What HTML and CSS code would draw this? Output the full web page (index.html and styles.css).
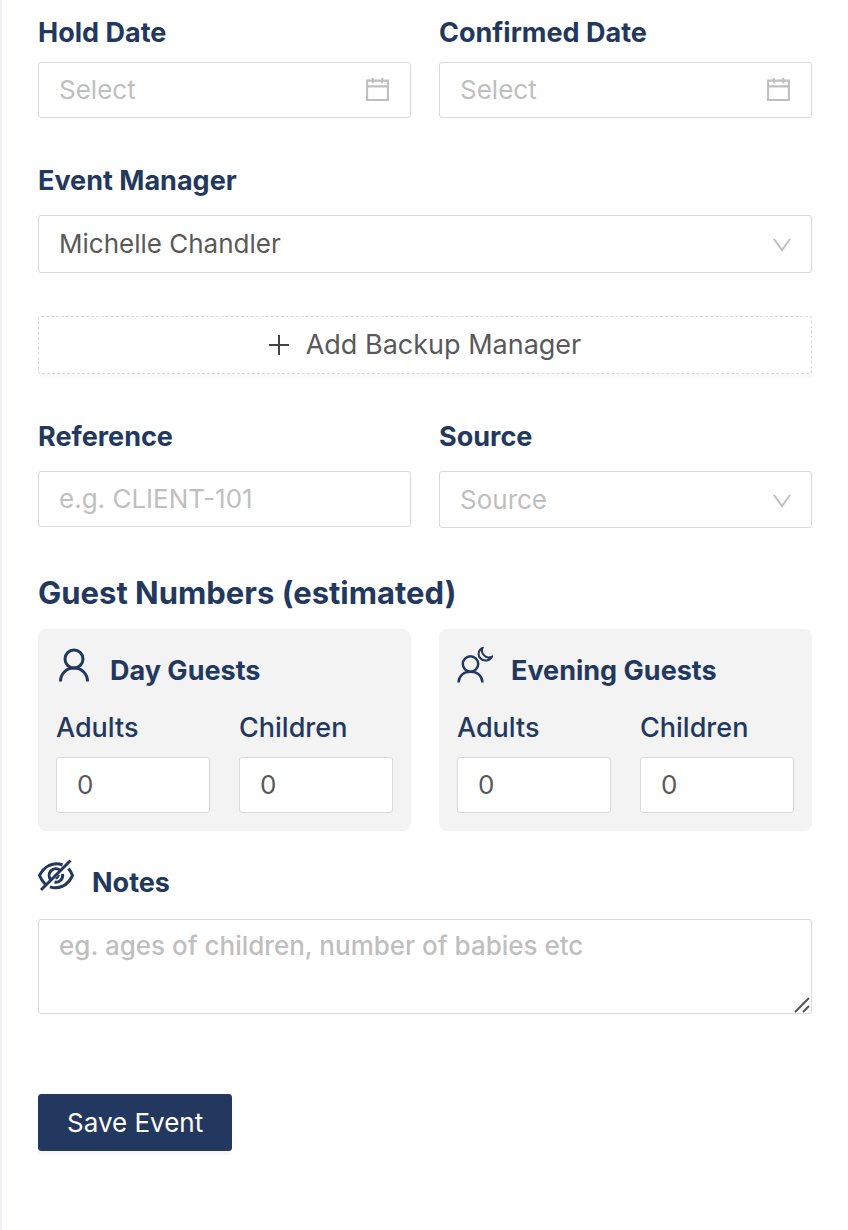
FILE: index.html
```
<!DOCTYPE html>
<html lang="en">
<head>
    <meta charset="UTF-8">
    <meta name="viewport" content="width=device-width, initial-scale=1.0">
    <title>Event</title>
    <link rel="stylesheet" href="styles.css">
</head>
<body>
    <form class="event-form">
        <div class="row dates">
            <div class="field">
                <label for="holdDate">Hold Date</label>
                <div class="control">
                    <input type="text" id="holdDate" placeholder="Select">
                    <svg class="icon-calendar" viewBox="0 0 24 24" aria-hidden="true">
                        <path d="M2 3.5h20v18.500H2zM2 9h20M7.500 1v5M16.500 1v5"/>
                    </svg>
                </div>
            </div>
            <div class="field">
                <label for="confirmedDate">Confirmed Date</label>
                <div class="control">
                    <input type="text" id="confirmedDate" placeholder="Select">
                    <svg class="icon-calendar" viewBox="0 0 24 24" aria-hidden="true">
                        <path d="M2 3.5h20v18.500H2zM2 9h20M7.500 1v5M16.500 1v5"/>
                    </svg>
                </div>
            </div>
        </div>

        <div class="field manager">
            <label for="manager">Event Manager</label>
            <div class="control">
                <select id="manager">
                    <option>Michelle Chandler</option>
                </select>
                <svg class="icon-arrow" viewBox="0 0 18 14" aria-hidden="true">
                    <path d="M1 1l8 11 8-11"/>
                </svg>
            </div>
        </div>

        <button type="button" class="btn-add">
            <svg class="icon-plus" viewBox="0 0 20 22" aria-hidden="true">
                <path d="M0 11h20M10 1v20"/>
            </svg>
            Add Backup Manager
        </button>

        <div class="row">
            <div class="field">
                <label for="reference">Reference</label>
                <input type="text" id="reference" placeholder="e.g. CLIENT-101">
            </div>
            <div class="field">
                <label for="source">Source</label>
                <div class="control">
                    <select id="source" class="empty">
                        <option>Source</option>
                    </select>
                    <svg class="icon-arrow" viewBox="0 0 18 14" aria-hidden="true">
                        <path d="M1 1l8 11 8-11"/>
                    </svg>
                </div>
            </div>
        </div>

        <h2>Guest Numbers (estimated)</h2>
        <div class="row">
            <div class="guests">
                <div class="title">
                    <svg class="icon" viewBox="0 0 36 36" aria-hidden="true">
                        <circle cx="18" cy="12" r="9"/>
                        <path d="M4.500 34.500C4.500 27 10 21 18 21s13.500 6 13.500 13.500"/>
                    </svg>
                    <h3>Day Guests</h3>
                </div>
                <div class="numbers">
                    <div class="number">
                        <label for="dayAdults">Adults</label>
                        <input type="text" id="dayAdults" value="0">
                    </div>
                    <div class="number">
                        <label for="dayChildren">Children</label>
                        <input type="text" id="dayChildren" value="0">
                    </div>
                </div>
            </div>
            <div class="guests">
                <div class="title">
                    <svg class="icon icon-evening" viewBox="0 0 36 36" aria-hidden="true">
                        <circle cx="13.500" cy="17" r="7.700"/>
                        <path d="M1.500 35.500C2 29 6.500 24.700 13.500 24.700S25 29 25.500 35.500"/>
                        <path class="thin" d="M25.500 1C21 3 20.500 8.500 23.500 11.500C27 14.800 33 13.800 35 9.800C32 11 28.800 10.500 26.800 8.200C24.800 6 24.500 3.500 25.500 1z"/>
                    </svg>
                    <h3>Evening Guests</h3>
                </div>
                <div class="numbers">
                    <div class="number">
                        <label for="eveningAdults">Adults</label>
                        <input type="text" id="eveningAdults" value="0">
                    </div>
                    <div class="number">
                        <label for="eveningChildren">Children</label>
                        <input type="text" id="eveningChildren" value="0">
                    </div>
                </div>
            </div>
        </div>

        <div class="title notes-title">
            <svg class="icon icon-hidden" viewBox="0 0 36 36" aria-hidden="true">
                <path d="M24.500 6Q18 3.500 11 6.500Q5 9.500 1.500 16.500Q3.500 21.500 7.500 25.500M30.500 9.500Q33 12.500 34.500 16.500Q31 24 25 27Q18 30 12 27.800"/>
                <path d="M22 11.200A6.700 6.700 0 0 0 12.500 20.500M24.500 15A6.700 6.700 0 0 1 16.500 23"/>
                <path class="thin" d="M17.500 19.500Q20.500 19 20.800 16"/>
                <path d="M3 31L32.500 1.500"/>
            </svg>
            <label for="notes">Notes</label>
        </div>
        <div class="control">
            <textarea id="notes" placeholder="eg. ages of children, number of babies etc"></textarea>
            <svg class="icon-resize" viewBox="0 0 16 16" aria-hidden="true">
                <path d="M1 15L15 1M9 15l6-6"/>
            </svg>
        </div>

        <button type="submit" class="btn-save">Save Event</button>
    </form>
</body>
</html>
```
FILE: styles.css
```
* {
    box-sizing: border-box;
}
body {
    margin: 0;
    background-color: #fff;
    color: #595959;
    font-family: Inter, Arial, sans-serif;
    font-size: 26px;
    line-height: 40px;
}
.event-form {
    min-height: 100vh;
    padding: 13px 36px 40px;
    border-left: 2px solid #f0f0f7;
}
.row {
    display: grid;
    grid-template-columns: 1fr 1fr;
    align-items: start;
    gap: 28px;
}
label, h2, h3 {
    display: block;
    margin: 0;
    color: #23385f;
    font-weight: 700;
}
label, h3 {
    font-size: 27px;
}
h2 {
    margin: 45px 0 16px;
    font-size: 31px;
}
.field label {
    margin-bottom: 14px;
}
.dates label {
    margin-bottom: 9px;
}
.dates {
    margin-bottom: 43px;
}
.control {
    position: relative;
}
input, select, textarea, button {
    display: block;
    width: 100%;
    height: 56px;
    margin: 0;
    padding: 0 20px;
    border: 1px solid #d9d9d9;
    border-radius: 3px;
    background-color: #fff;
    color: #595959;
    font: inherit;
}
input {
    padding-bottom: 2px;
}
select {
    height: 57px;
    appearance: none;
}
.manager select {
    height: 58px;
}
.empty {
    color: #bfbfbf;
}
::placeholder {
    color: #bfbfbf;
    opacity: 1;
}
svg {
    fill: none;
    stroke: #bfbfbf;
    stroke-width: 2;
}
.icon-calendar {
    position: absolute;
    right: 21px;
    top: 15px;
    width: 25px;
    height: 25px;
}
.icon-arrow {
    position: absolute;
    right: 21px;
    top: 23px;
    width: 18px;
    height: 14px;
}
.btn-add {
    display: flex;
    align-items: center;
    justify-content: center;
    gap: 17px;
    height: 58px;
    margin: 43px 0;
    border-style: dashed;
    font-size: 27px;
    box-shadow: 0 4px 0 rgba(0, 0, 0, 0.02);
    cursor: pointer;
}
.icon-plus {
    width: 20px;
    height: 22px;
    stroke: #444;
}
.guests {
    padding: 18px;
    border-radius: 8px;
    background-color: #f3f3f3;
}
.title {
    display: flex;
    align-items: flex-start;
    gap: 18px;
    height: 46px;
}
.title h3, .title label {
    line-height: 48px;
}
.icon {
    width: 36px;
    height: 36px;
    stroke: #23385f;
    stroke-width: 3;
}
.icon-evening {
    stroke-width: 2.5;
}
.icon .thin {
    stroke-width: 2;
}
.numbers {
    display: grid;
    grid-template-columns: 1fr 1fr;
    gap: 29px;
    margin-top: 15px;
}
.number label {
    margin-bottom: 9px;
    font-weight: 500;
}
.notes-title {
    margin: 28px 0 14px;
}
textarea {
    height: 95px;
    padding: 6px 20px;
    font-weight: 500;
    resize: none;
}
.icon-resize {
    position: absolute;
    right: 2px;
    bottom: 1px;
    width: 16px;
    height: 16px;
    stroke: #555;
}
.btn-save {
    width: auto;
    height: 57px;
    margin-top: 80px;
    padding: 0 28px;
    border-color: #23385f;
    background-color: #23385f;
    color: #fff;
    box-shadow: 0 4px 0 rgba(0, 0, 0, 0.03);
    cursor: pointer;
}
```
